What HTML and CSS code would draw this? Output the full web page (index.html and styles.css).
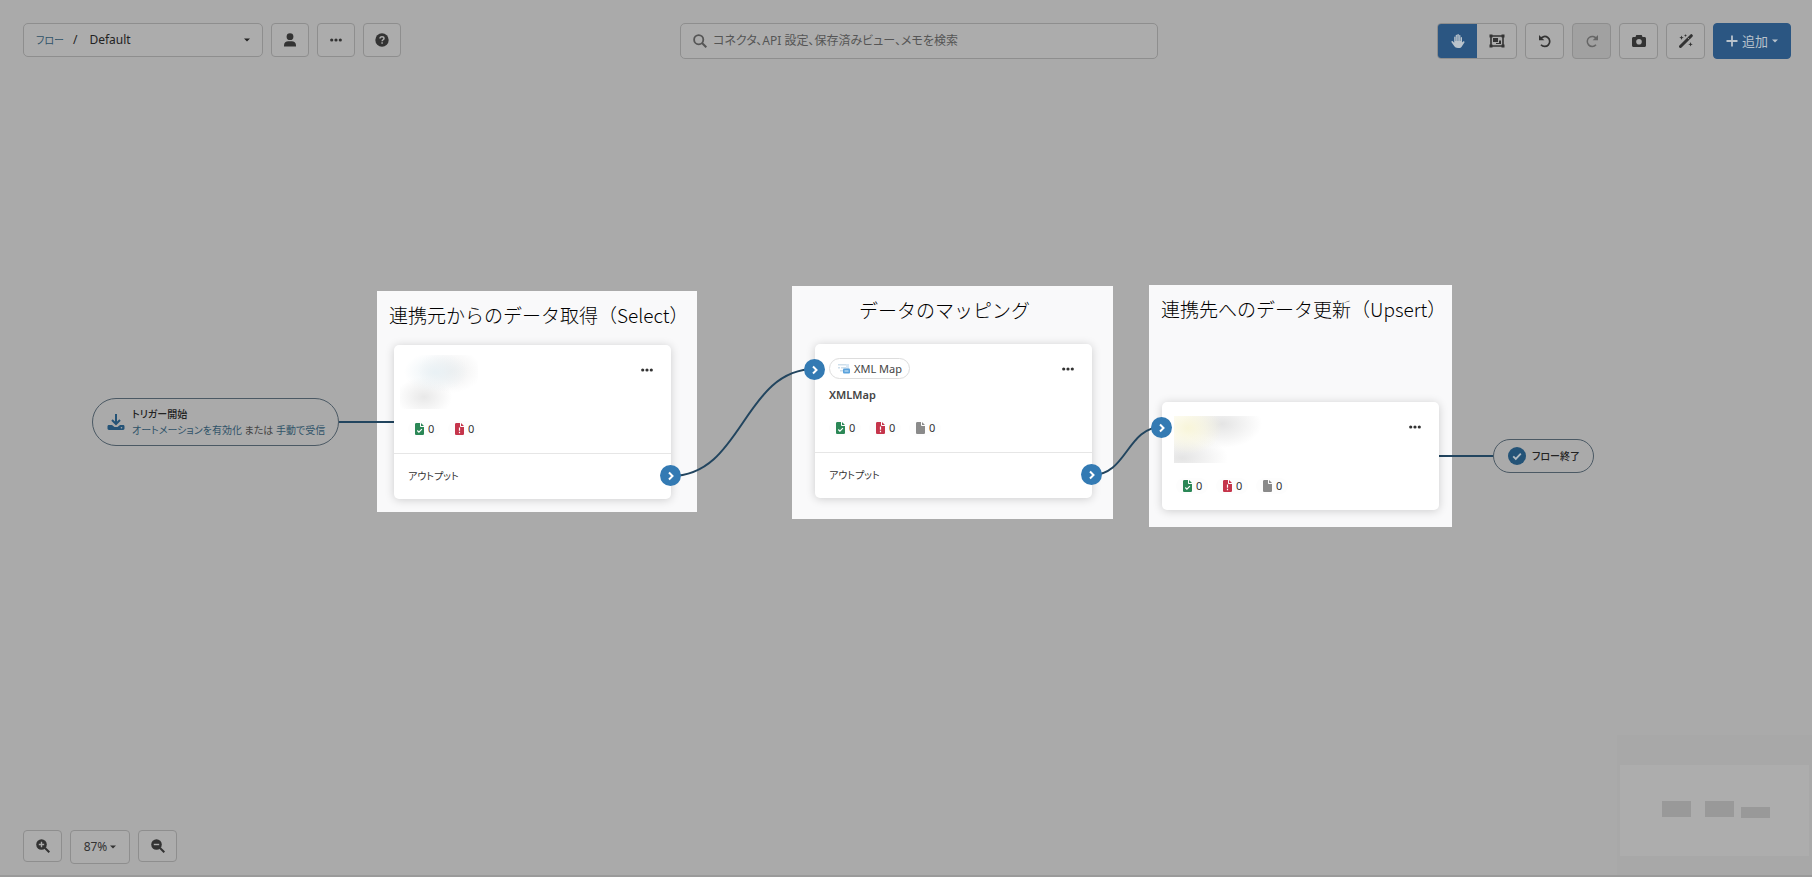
FILE: index.html
```html
<!DOCTYPE html>
<html lang="ja">

<head>
    <meta charset="UTF-8" />
    <title>フロー</title>
    <link rel="stylesheet" href="styles.css">
</head>

<body>
    <!-- shared icons -->
    <svg class="sprite" aria-hidden="true">
        <symbol id="icon-dots" viewBox="0 0 12 4">
            <circle cx="1.7" cy="2" r="1.6" /><circle cx="6" cy="2" r="1.6" /><circle cx="10.3" cy="2" r="1.6" />
        </symbol>
        <symbol id="icon-caret" viewBox="0 0 6 4">
            <path d="M0 0.5h6L3 3.5z" />
        </symbol>
        <symbol id="icon-file-ok" viewBox="0 0 9 12">
            <path d="M1.3 0H5v3.2c0 .4.3.8.8.8H9v6.7c0 .7-.6 1.3-1.3 1.3H1.3C.6 12 0 11.4 0 10.7V1.3C0 .6.6 0 1.3 0zM6 0l3 3H6z" />
            <path d="M2.3 7.5l1.6 1.6 3-3" fill="none" stroke="#fff" stroke-width="1.2" />
        </symbol>
        <symbol id="icon-file-error" viewBox="0 0 9 12">
            <path d="M1.3 0H5v3.2c0 .4.3.8.8.8H9v6.7c0 .7-.6 1.3-1.3 1.3H1.3C.6 12 0 11.4 0 10.7V1.3C0 .6.6 0 1.3 0zM6 0l3 3H6z" />
            <path d="M4.500 4.500v3.200M4.500 8.800v1.400" fill="none" stroke="#fff" stroke-width="1.2" />
        </symbol>
        <symbol id="icon-file" viewBox="0 0 9 12">
            <path d="M1.3 0H5v3.2c0 .4.3.8.8.8H9v6.7c0 .7-.6 1.3-1.3 1.3H1.3C.6 12 0 11.4 0 10.7V1.3C0 .6.6 0 1.3 0zM6 0l3 3H6z" />
        </symbol>
        <symbol id="icon-chevron" viewBox="0 0 8 10">
            <path d="M2 1.5L5.500 5 2 8.500" fill="none" stroke="#fff" stroke-width="2" />
        </symbol>
    </svg>

    <div class="workspace">
        <main class="canvas">
            <section class="highlight highlight-select">
                <h2>連携元からのデータ取得（Select）</h2>
            </section>
            <section class="highlight highlight-map">
                <h2>データのマッピング</h2>
            </section>
            <section class="highlight highlight-upsert">
                <h2>連携先へのデータ更新（Upsert）</h2>
            </section>

            <svg class="wires" width="1812" height="877" aria-hidden="true">
                <path d="M339 422H394" />
                <path d="M671 476C743 476 743 369 815 369" />
                <path d="M1092 475C1127 475 1127 427 1162 427" />
                <path d="M1439 456H1493" />
            </svg>

            <div class="pill trigger">
                <svg class="trigger-icon" viewBox="0 0 18 18" aria-hidden="true">
                    <path d="M9 1v9M5 7l4 4 4-4" fill="none" stroke="currentColor" stroke-width="2" />
                    <path d="M2 12h3l2.500 2h3L13 12h3c1 0 1.500.6 1.500 1.400v2.200c0 .8-.6 1.400-1.400 1.400H1.900C1.100 17 .5 16.400.5 15.600v-2.200C.5 12.600 1 12 2 12z" fill="currentColor" />
                    <circle cx="14.500" cy="14.700" r=".8" fill="#aaa" />
                </svg>
                <div>
                    <strong>トリガー開始</strong>
                    <p><a href="#">オートメーションを有効化</a> または <a href="#">手動で受信</a></p>
                </div>
            </div>

            <article class="card card-select">
                <div class="card-body">
                    <div class="card-top">
                        <div class="redacted-source"></div>
                        <button type="button" class="more" aria-label="メニュー"><svg><use href="#icon-dots" /></svg></button>
                    </div>
                    <ul class="stats">
                        <li><svg class="ok"><use href="#icon-file-ok" /></svg>0</li>
                        <li><svg class="error"><use href="#icon-file-error" /></svg>0</li>
                    </ul>
                </div>
                <div class="card-output">アウトプット</div>
                <span class="port port-out"><svg><use href="#icon-chevron" /></svg></span>
            </article>

            <article class="card card-map">
                <div class="card-body">
                    <div class="card-top">
                        <div>
                            <span class="tag">
                                <svg viewBox="0 0 12 11" aria-hidden="true">
                                    <path d="M0 1h9v1.500H0zM0 4h2v1.500H0zM3 4h6v1.500H3zM2 7h3v1.500H2z" fill="#cfdfeb" />
                                    <path d="M8 1h3v5H8z" fill="#d9e8f5" />
                                    <rect x="5" y="5.500" width="7" height="5" rx="1" fill="#5aa2dc" />
                                    <path d="M6.500 8h4" stroke="#d5e9f8" />
                                </svg>
                                XML Map
                            </span>
                            <h3>XMLMap</h3>
                        </div>
                        <button type="button" class="more" aria-label="メニュー"><svg><use href="#icon-dots" /></svg></button>
                    </div>
                    <ul class="stats">
                        <li><svg class="ok"><use href="#icon-file-ok" /></svg>0</li>
                        <li><svg class="error"><use href="#icon-file-error" /></svg>0</li>
                        <li><svg class="pending"><use href="#icon-file" /></svg>0</li>
                    </ul>
                </div>
                <div class="card-output">アウトプット</div>
                <span class="port port-in"><svg><use href="#icon-chevron" /></svg></span>
                <span class="port port-out"><svg><use href="#icon-chevron" /></svg></span>
            </article>

            <article class="card card-upsert">
                <div class="card-body">
                    <div class="card-top">
                        <div class="redacted-target"></div>
                        <button type="button" class="more" aria-label="メニュー"><svg><use href="#icon-dots" /></svg></button>
                    </div>
                    <ul class="stats">
                        <li><svg class="ok"><use href="#icon-file-ok" /></svg>0</li>
                        <li><svg class="error"><use href="#icon-file-error" /></svg>0</li>
                        <li><svg class="pending"><use href="#icon-file" /></svg>0</li>
                    </ul>
                </div>
                <span class="port port-in"><svg><use href="#icon-chevron" /></svg></span>
            </article>

            <div class="pill flow-end">
                <svg class="end-icon" viewBox="0 0 18 18" aria-hidden="true">
                    <circle cx="9" cy="9" r="9" fill="currentColor" />
                    <path d="M5.200 9.300l2.600 2.600 5-5.200" fill="none" stroke="#b4bcc2" stroke-width="1.8" />
                </svg>
                <strong>フロー終了</strong>
            </div>
        </main>

        <header class="toolbar">
            <div class="toolbar-group toolbar-left">
                <div class="breadcrumb">
                    <a href="#">フロー</a>
                    <span>/</span>
                    <select aria-label="フロー">
                        <option>Default</option>
                    </select>
                    <svg class="caret"><use href="#icon-caret" /></svg>
                </div>
                <button type="button" class="btn" aria-label="ユーザー">
                    <svg class="icon" viewBox="0 1 14 14"><circle cx="7" cy="4.700" r="3.400" /><path d="M1 14.500v-1.200C1 10.800 3 9.300 5.200 9.300h3.600c2.200 0 4.200 1.500 4.200 4v1.200z" /></svg>
                </button>
                <button type="button" class="btn" aria-label="その他">
                    <svg class="icon-more"><use href="#icon-dots" /></svg>
                </button>
                <button type="button" class="btn" aria-label="ヘルプ">
                    <svg class="icon" viewBox="0 0 14 14"><circle cx="7" cy="7" r="6.700" /><path d="M5 5.500C5 4.200 5.900 3.700 7 3.700s2 .7 2 1.700c0 1.300-1.900 1.400-1.900 2.800M7.100 9.200v1.600" fill="none" stroke="#acacac" stroke-width="1.5" /></svg>
                </button>
            </div>

            <label class="search">
                <svg class="icon" viewBox="0 0 14 14"><circle cx="5.700" cy="5.700" r="4.600" fill="none" stroke="currentColor" stroke-width="1.8" /><path d="M9 9l4.300 4.300" stroke="currentColor" stroke-width="2" /></svg>
                <input type="search" aria-label="検索" placeholder="コネクタ、API 設定、保存済みビュー、メモを検索">
            </label>

            <div class="toolbar-group">
                <div class="toggle">
                    <button type="button" class="active" aria-label="移動">
                        <svg class="icon" viewBox="0 0 14 14"><path d="M3.200 8.800V3.200c0-1 1.500-1 1.500 0V1.500c0-1 1.600-1 1.600 0V.9c0-1.100 1.600-1.100 1.600 0v.9c0-1 1.600-1 1.600 0v2c0-1 1.500-1 1.500 0V8.500l1-1c.8-.8 2 .1 1.400 1l-2.600 4c-.7 1-1.500 1.500-2.800 1.500H7C5 14 4 13.300 3 11.800L.5 8.300c-.6-.9.6-1.800 1.300-1z" /><path d="M4.700 2.500V7M6.300 1.500V7M7.900 1.500V7M9.500 2.500V7" stroke="#2b5682" stroke-width=".4" /></svg>
                    </button>
                    <button type="button" aria-label="範囲選択">
                        <svg class="icon-frame" viewBox="0 0 16 14"><path d="M2 2h12v10H2z" fill="none" stroke="currentColor" stroke-width="1.6" /><path d="M.5.5h3v3h-3zM12.500.5h3v3h-3zM.5 10.500h3v3h-3zM12.500 10.500h3v3h-3zM4 4h5v4H4z" /><path d="M10 6.500h2V10H7V9h3z" /></svg>
                    </button>
                </div>
                <button type="button" class="btn" aria-label="元に戻す">
                    <svg class="icon" viewBox="0 0 14 14"><path d="M2.500 4.800A5 5 0 1 1 3 10.800" fill="none" stroke="currentColor" stroke-width="1.7" /><path d="M1 1v5.300h5.300z" /></svg>
                </button>
                <button type="button" class="btn" aria-label="やり直す" disabled>
                    <svg class="icon" viewBox="0 0 14 14"><path d="M11.500 4.800A5 5 0 1 0 11 10.800" fill="none" stroke="currentColor" stroke-width="1.5" /><path d="M13 1v5.300H7.700z" /></svg>
                </button>
                <button type="button" class="btn" aria-label="スナップショット">
                    <svg class="icon" viewBox="0 0 14 14"><path fill-rule="evenodd" d="M4.300 1h5.400l.8 2H12.500c.8 0 1.500.7 1.500 1.500v7c0 .8-.7 1.500-1.500 1.500h-11C.7 13 0 12.300 0 11.500v-7C0 3.700.7 3 1.500 3h2zM7 5a2.800 2.800 0 1 0 0 5.600A2.800 2.800 0 0 0 7 5z" /></svg>
                </button>
                <button type="button" class="btn" aria-label="自動整列">
                    <svg class="icon" viewBox="0 0 14 14"><path d="M1.500 12.500L12.300 1.700" stroke="currentColor" stroke-width="3" stroke-linecap="round" /><path d="M8.800 3.800l1.500 1.500" stroke="#acacac" stroke-width=".8" /><path d="M2.500 1.500l.6 1.600 1.600.6-1.600.6-.6 1.600-.6-1.600-1.600-.6 1.600-.6zM6.500 0l.4 1.100 1.100.4-1.100.4-.4 1.100-.4-1.100L5 1.500l1.100-.4zM11.500 8l.6 1.700 1.700.6-1.700.6-.6 1.700-.6-1.700-1.700-.6 1.700-.6z" /></svg>
                </button>
                <button type="button" class="btn btn-primary">
                    <svg class="icon" viewBox="0 0 12 12"><path d="M6 .5v11M.5 6h11" stroke="currentColor" stroke-width="1.8" /></svg>
                    追加
                    <svg class="caret"><use href="#icon-caret" /></svg>
                </button>
            </div>
        </header>

        <footer class="bottom-bar">
            <div class="zoom">
                <button type="button" class="btn" aria-label="拡大">
                    <svg class="icon" viewBox="0 0 14 14"><circle cx="5.500" cy="5.500" r="5.300" /><path d="M9 9l4.300 4.300" stroke="currentColor" stroke-width="2" /><path d="M5.500 2.800v5.400M2.800 5.500h5.400" stroke="#acacac" stroke-width="1.4" /></svg>
                </button>
                <button type="button" class="btn zoom-level">87% <svg class="caret"><use href="#icon-caret" /></svg></button>
                <button type="button" class="btn" aria-label="縮小">
                    <svg class="icon" viewBox="0 0 14 14"><circle cx="5.500" cy="5.500" r="5.300" /><path d="M9 9l4.300 4.300" stroke="currentColor" stroke-width="2" /><path d="M2.800 5.500h5.400" stroke="#acacac" stroke-width="1.4" /></svg>
                </button>
            </div>
            <div class="minimap">
                <svg viewBox="0 0 189 91" aria-hidden="true">
                    <rect width="189" height="91" fill="#adadad" />
                    <path d="M42 36h29v16H42zM85 36h29v16H85zM121 42h29v11h-29z" fill="#999" />
                </svg>
            </div>
        </footer>
    </div>
</body>

</html>
```
FILE: styles.css
```css
* {
    box-sizing: border-box;
}

body {
    margin: 0;
    background: #aaa;
    color: #333;
    font-family: "Noto Sans", "Noto Sans CJK JP", sans-serif;
    font-size: 12px;
    line-height: 16px;
    font-feature-settings: "palt";
}

h2, h3, p, ul {
    margin: 0;
    padding: 0;
}

a {
    color: #2f5268;
    text-decoration: none;
}

button, input, select {
    font: inherit;
    font-feature-settings: inherit;
    color: inherit;
}

button {
    padding: 0;
    cursor: pointer;
}

svg {
    display: block;
    flex: none;
    fill: currentColor;
}

.sprite {
    position: absolute;
    width: 0;
    height: 0;
}

.workspace {
    position: relative;
    min-height: 100vh;
    display: flex;
    flex-direction: column;
    justify-content: space-between;
    overflow: hidden;
    border-bottom: 2px solid #9a9a9a;
}

/* toolbar */
.toolbar {
    position: relative;
    display: flex;
    justify-content: space-between;
    align-items: flex-start;
    padding: 23px 21px 0 23px;
}

.toolbar-group {
    display: flex;
    gap: 8px;
}

.btn {
    display: flex;
    align-items: center;
    justify-content: center;
    width: 39px;
    height: 36px;
    background: #acacac;
    border: 1px solid #8e8e8e;
    border-radius: 4px;
}

.btn:disabled {
    background: #a1a1a1;
    color: #666;
}

.toolbar-left .btn {
    width: 38px;
    height: 34px;
}

.icon {
    width: 14px;
    height: 14px;
}

.icon-frame {
    width: 16px;
    height: 14px;
}

.icon-more {
    width: 12px;
    height: 4px;
}

.caret {
    width: 6px;
    height: 4px;
}

.breadcrumb {
    display: flex;
    align-items: center;
    gap: 9px;
    width: 240px;
    height: 34px;
    padding: 0 12px;
    background: #acacac;
    border: 1px solid #8e8e8e;
    border-radius: 5px;
    color: #222;
}

.breadcrumb a {
    font-size: 10px;
}

.breadcrumb select {
    flex: 1;
    appearance: none;
    background: none;
    border: none;
    padding: 0 3px;
}

.search {
    display: flex;
    align-items: center;
    gap: 6px;
    width: 478px;
    height: 36px;
    padding: 0 12px;
    background: #acacac;
    border: 1px solid #8e8e8e;
    border-radius: 5px;
    color: #555;
}

.search input {
    flex: 1;
    background: none;
    border: none;
    outline: none;
    padding: 0;
}

.search input::placeholder {
    color: #555;
}

.toggle {
    display: flex;
    height: 36px;
    border: 1px solid #8e8e8e;
    border-radius: 4px;
    background: #acacac;
    overflow: hidden;
}

.toggle button {
    display: flex;
    align-items: center;
    justify-content: center;
    width: 39px;
    background: none;
    border: none;
}

.toggle .active,
.btn-primary {
    background: #2b5682;
    color: #b9c3cc;
}

.btn-primary {
    gap: 4px;
    width: 78px;
    border-color: #2b5682;
    font-size: 13px;
}

.btn-primary .icon {
    width: 12px;
}

/* canvas */
.canvas {
    position: absolute;
    inset: 0;
}

.highlight {
    position: absolute;
    background: #f9f9fa;
}

.highlight h2 {
    color: #000;
    font-family: "Noto Sans CJK JP", sans-serif;
    font-feature-settings: normal;
    font-size: 19px;
    font-weight: 300;
    line-height: 24px;
    white-space: nowrap;
    padding: 12px 12px 0;
}

.highlight-select {
    left: 377px;
    top: 291px;
    width: 320px;
    height: 221px;
}

.highlight-map {
    left: 792px;
    top: 286px;
    width: 321px;
    height: 233px;
    padding-right: 16px;
    text-align: center;
}

.highlight-upsert {
    left: 1149px;
    top: 285px;
    width: 303px;
    height: 242px;
}

.wires {
    position: absolute;
    left: 0;
    top: 0;
    fill: none;
    stroke: #22455f;
    stroke-width: 2;
}

.pill {
    position: absolute;
    display: flex;
    align-items: center;
    border: 1px solid #4b5964;
    border-radius: 25px;
    background: #aaa;
    font-size: 10px;
    white-space: nowrap;
}

.pill p {
    color: #444;
}

.pill strong {
    display: block;
    font-weight: 500;
    color: #222;
}

.trigger {
    left: 92px;
    top: 398px;
    width: 247px;
    height: 48px;
    gap: 7px;
    padding-left: 14px;
}

.trigger-icon {
    width: 18px;
    height: 18px;
    color: #245377;
}

.flow-end {
    left: 1493px;
    top: 439px;
    height: 34px;
    width: 101px;
    gap: 6px;
    padding-left: 14px;
}

.end-icon {
    width: 18px;
    height: 18px;
    color: #245377;
}

.card {
    position: absolute;
    width: 277px;
    background: #fff;
    border-radius: 5px;
    box-shadow: 0 1px 10px rgba(0, 0, 0, 0.18);
    font-size: 11px;
}

.card-select {
    left: 394px;
    top: 345px;
}

.card-map {
    left: 815px;
    top: 344px;
}

.card-upsert {
    left: 1162px;
    top: 402px;
}

.card-body {
    padding: 14px 14px 16px;
}

.card-top {
    display: flex;
    justify-content: space-between;
    align-items: flex-start;
    height: 54px;
}

.more {
    width: 20px;
    height: 22px;
    padding: 0 4px;
    background: none;
    border: none;
}

.more svg {
    width: 12px;
    height: 4px;
}

.tag {
    display: inline-flex;
    align-items: center;
    gap: 4px;
    height: 21px;
    padding: 0 7px 0 8px;
    border: 1px solid #ddd;
    border-radius: 11px;
    color: #444;
}

.tag svg {
    width: 12px;
    height: 11px;
}

.card h3 {
    font-size: 11px;
    font-weight: 600;
    line-height: 16px;
    margin-top: 8px;
    color: #444;
}

.stats {
    display: flex;
    gap: 8px;
    margin-top: 8px;
    list-style: none;
}

.stats li {
    display: flex;
    align-items: center;
    gap: 4px;
    width: 32px;
    height: 16px;
    padding-left: 7px;
    border-radius: 8px;
    background: #fdfdfd;
}

.stats svg {
    width: 9px;
    height: 12px;
}

.ok {
    color: #2b8756;
}

.error {
    color: #c5354b;
}

.pending {
    color: #8a8a8a;
}

.card-output {
    border-top: 1px solid #e6e6e6;
    padding: 14px;
    font-size: 10px;
    line-height: 17px;
}

.port {
    position: absolute;
    display: flex;
    align-items: center;
    justify-content: center;
    width: 21px;
    height: 21px;
    border-radius: 50%;
    background: #337ab3;
}

.port svg {
    width: 8px;
    height: 10px;
}

.port-in {
    left: -11px;
    top: 15px;
}

.port-out {
    right: -10px;
    bottom: 13px;
}

/* blurred connector names */
.redacted-source {
    width: 78px;
    height: 54px;
    margin: -4px 0 0 -8px;
    background:
        radial-gradient(ellipse 32px 20px at 36px 17px, #e9f1f5, transparent),
        radial-gradient(ellipse 32px 22px at 50px 16px, #ededed, transparent),
        radial-gradient(ellipse 28px 20px at 24px 42px, #e8e8e8, transparent);
}

.redacted-target {
    width: 92px;
    height: 47px;
    margin-left: -2px;
    background:
        radial-gradient(ellipse 34px 26px at 14px 12px, #f8f5d9, transparent),
        radial-gradient(ellipse 40px 24px at 48px 8px, #e4e4e4, transparent),
        radial-gradient(ellipse 46px 24px at 8px 42px, #e4e4e4, transparent);
}

/* bottom */
.bottom-bar {
    position: relative;
    display: flex;
    justify-content: space-between;
    align-items: flex-end;
}

.zoom {
    display: flex;
    gap: 8px;
    padding: 0 0 11px 23px;
}

.zoom .btn {
    height: 32px;
}

.zoom .zoom-level {
    width: 60px;
    height: 34px;
    gap: 3px;
}

.minimap {
    padding: 30px 3px 19px;
    background: #a8a8a8;
}

.minimap svg {
    width: 189px;
    height: 91px;
}
```
